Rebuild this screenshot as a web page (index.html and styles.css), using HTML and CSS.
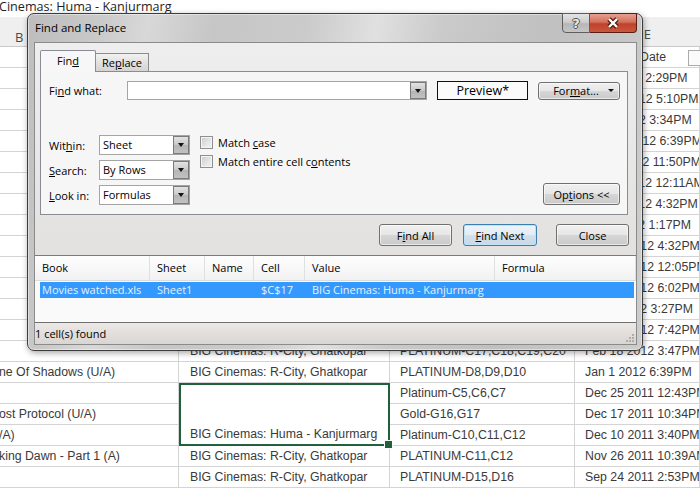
FILE: index.html
```html
<!DOCTYPE html>
<html lang="en">
<head>
  <meta charset="UTF-8" />
  <title>Find and Replace</title>
  <link rel="stylesheet" href="styles.css">
</head>
<body>

  <div class="formula-bar">Cinemas: Huma - Kanjurmarg</div>
  <div class="col-heads"><span class="col-b">B</span><span class="col-e">E</span></div>

  <div class="sheet">
    <div class="a"></div><div class="b"></div><div></div><div class="hd">Date<span class="filter-btn"></span></div>

    <div class="a"></div><div class="b"></div><div></div><div>Jul 8 2012 2:29PM</div>
    <div class="a"></div><div class="b"></div><div></div><div>Jun 24 2012 5:10PM</div>
    <div class="a"></div><div class="b"></div><div></div><div>Jun 9 2012 3:34PM</div>
    <div class="a"></div><div class="b"></div><div></div><div>May 27 2012 6:39PM</div>
    <div class="a"></div><div class="b"></div><div></div><div>May 5 2012 11:50PM</div>
    <div class="a"></div><div class="b"></div><div></div><div>Apr 28 2012 12:11AM</div>
    <div class="a"></div><div class="b"></div><div></div><div>Apr 14 2012 4:32PM</div>
    <div class="a"></div><div class="b"></div><div></div><div>Apr 1 2012 1:17PM</div>
    <div class="a"></div><div class="b"></div><div></div><div>Mar 24 2012 4:32PM</div>
    <div class="a"></div><div class="b"></div><div></div><div>Mar 17 2012 12:05PM</div>
    <div class="a"></div><div class="b"></div><div></div><div>Mar 10 2012 6:02PM</div>
    <div class="a"></div><div class="b"></div><div></div><div>Mar 3 2012 3:27PM</div>
    <div class="a"></div><div class="b"></div><div></div><div>Feb 25 2012 7:42PM</div>
    <div class="a"></div><div class="b">BIG Cinemas: R-City, Ghatkopar</div><div>PLATINUM-C17,C18,C19,C20</div><div>Feb 18 2012 3:47PM</div>
    <div class="a">ne Of Shadows (U/A)</div><div class="b">BIG Cinemas: R-City, Ghatkopar</div><div>PLATINUM-D8,D9,D10</div><div>Jan 1 2012 6:39PM</div>
    <div class="a"></div><div class="b merged">BIG Cinemas: Huma - Kanjurmarg</div><div>Platinum-C5,C6,C7</div><div>Dec 25 2011 12:43PM</div>
    <div class="a">ost Protocol (U/A)</div><div>Gold-G16,G17</div><div>Dec 17 2011 10:34PM</div>
    <div class="a">/A)</div><div>Platinum-C10,C11,C12</div><div>Dec 10 2011 3:40PM</div>
    <div class="a">king Dawn - Part 1 (A)</div><div class="b">BIG Cinemas: R-City, Ghatkopar</div><div>PLATINUM-C11,C12</div><div>Nov 26 2011 10:39AM</div>
    <div class="a"></div><div class="b">BIG Cinemas: R-City, Ghatkopar</div><div>PLATINUM-D15,D16</div><div>Sep 24 2011 2:53PM</div>
  </div>

  <div class="dialog">
    <div class="titlebar">
      <span class="title">Find and Replace</span>
      <div class="caption">
        <span class="cap-help">?</span>
        <span class="cap-close">
          <svg width="14" height="12" viewBox="0 0 14 12">
            <path d="M3 2 L11 10 M11 2 L3 10" stroke="#4a1a12" stroke-width="4.6" fill="none"/>
            <path d="M3 2 L11 10 M11 2 L3 10" stroke="#fff" stroke-width="2.4" fill="none"/>
          </svg>
        </span>
      </div>
    </div>

    <div class="client">
      <div class="tabs">
        <span class="tab active">Fin<u>d</u></span>
        <span class="tab">Re<u>p</u>lace</span>
      </div>

      <div class="panel">
        <div class="find-row">
          <span class="lbl-find">Fi<u>n</u>d what:</span>
          <div class="combo wide"><span class="val"></span><span class="drop"><i class="arrow"></i></span></div>
          <div class="preview">Preview*</div>
          <button class="btn format"><span>For<u>m</u>at...</span><i class="arrow"></i></button>
        </div>

        <div class="opt-row">
          <div class="selects">
            <div class="field"><span class="lbl">Wit<u>h</u>in:</span><div class="combo"><span class="val">Sheet</span><span class="drop"><i class="arrow"></i></span></div></div>
            <div class="field"><span class="lbl"><u>S</u>earch:</span><div class="combo"><span class="val">By Rows</span><span class="drop"><i class="arrow"></i></span></div></div>
            <div class="field"><span class="lbl"><u>L</u>ook in:</span><div class="combo"><span class="val">Formulas</span><span class="drop"><i class="arrow"></i></span></div></div>
          </div>
          <div class="checks">
            <div class="check"><span class="box"></span><span>Match <u>c</u>ase</span></div>
            <div class="check"><span class="box"></span><span>Match entire cell c<u>o</u>ntents</span></div>
          </div>
          <button class="btn options">Op<u>t</u>ions &lt;&lt;</button>
        </div>
      </div>

      <div class="actions">
        <button class="btn find-all">F<u>i</u>nd All</button>
        <button class="btn find-next"><u>F</u>ind Next</button>
        <button class="btn close">Close</button>
      </div>

      <div class="results">
        <div class="res-row res-head">
          <span>Book</span><span>Sheet</span><span>Name</span><span>Cell</span><span>Value</span><span>Formula</span>
        </div>
        <div class="res-row res-sel">
          <span>Movies watched.xls</span><span>Sheet1</span><span></span><span>$C$17</span><span>BIG Cinemas: Huma - Kanjurmarg</span><span></span>
        </div>
      </div>

      <div class="status">
        <span>1 cell(s) found</span>
        <svg class="grip" width="9" height="9" viewBox="0 0 9 9">
          <rect x="7" y="1" width="2" height="2" fill="#b0aca8"/>
          <rect x="4" y="4" width="2" height="2" fill="#b0aca8"/>
          <rect x="7" y="4" width="2" height="2" fill="#b0aca8"/>
          <rect x="1" y="7" width="2" height="2" fill="#b0aca8"/>
          <rect x="4" y="7" width="2" height="2" fill="#b0aca8"/>
          <rect x="7" y="7" width="2" height="2" fill="#b0aca8"/>
        </svg>
      </div>
    </div>
  </div>

</body>
</html>
```

FILE: styles.css
```css
* {
  box-sizing: border-box;
  margin: 0;
  padding: 0;
}

body {
  width: 700px;
  height: 488px;
  overflow: hidden;
  position: relative;
  background: #fff;
  font-family: "Liberation Sans", Arial, sans-serif;
  color: #3a3a3a;
}

/* spreadsheet behind the dialog */

.formula-bar {
  height: 17px;
  margin-left: -1px;
  font: 12.6px/14px "Open Sans", sans-serif;
  color: #1e1e1e;
  white-space: nowrap;
}

.col-heads {
  height: 30px;
  display: flex;
  align-items: flex-end;
  background: #efefef;
  border-bottom: 1px solid #c9c9c9;
  font: 13px/18px "Open Sans", sans-serif;
  color: #4a4a4a;
}

.col-b {
  margin-left: 15px;
}

.col-e {
  margin-left: auto;
  margin-right: 49px;
  margin-bottom: 3px;
}

.sheet {
  display: grid;
  grid-template-columns: 179px 211px 185px 125px;
  grid-auto-rows: 21px;
  font-size: 12.3px;
}

.sheet > div {
  border-right: 1px solid #d4d4d4;
  border-bottom: 1px solid #d4d4d4;
  padding-left: 10px;
  line-height: 20px;
  white-space: nowrap;
  overflow: hidden;
}

.sheet > .a {
  padding-left: 0;
  text-indent: -1px;
}

.sheet > .b {
  padding-left: 11px;
}

.sheet > .hd {
  position: relative;
  padding-left: 65px;
  overflow: visible;
}

.filter-btn {
  position: absolute;
  left: 113px;
  top: 3px;
  width: 14px;
  height: 16px;
  border: 1px solid #ababab;
  background: #fafafa;
}

.sheet > .merged {
  grid-row: span 3;
  position: relative;
  display: flex;
  align-items: flex-end;
  padding-left: 9px;
  line-height: 19px;
  border: 2px solid #20603a;
  overflow: visible;
}

.merged::after {
  content: "";
  position: absolute;
  right: -5px;
  bottom: -5px;
  width: 7px;
  height: 7px;
  background: #20603a;
  border: 1px solid #fff;
}

/* dialog window */

.dialog {
  position: absolute;
  left: 27px;
  top: 13px;
  width: 616px;
  height: 338px;
  display: flex;
  flex-direction: column;
  padding: 0 5px 5px 6px;
  border: 1px solid #3c3c3c;
  border-radius: 7px;
  background: linear-gradient(100deg, #bdbdbd 0%, #c8c8c8 10%, #d8d8d8 18%, #c6c6c6 28%, #cbcbcb 42%, #e0e0e0 52%, #cacaca 62%, #c0c0c0 78%, #cdcdcd 100%);
  box-shadow: 1px 2px 6px rgba(0,0,0,0.35), inset 0 0 0 1px rgba(255,255,255,0.45);
  font-family: "Open Sans", sans-serif;
  font-size: 11px;
  color: #000;
}

.titlebar {
  height: 28px;
  display: flex;
  align-items: flex-start;
}

.title {
  flex: 1;
  padding: 7px 0 0 1px;
  font-size: 11.5px;
  line-height: 14px;
}

.caption {
  display: flex;
  margin-top: -1px;
}

.cap-help,
.cap-close {
  height: 20px;
  display: flex;
  align-items: center;
  justify-content: center;
}

.cap-help {
  width: 28px;
  border: 1px solid #5e5e5e;
  border-radius: 0 0 0 4px;
  background: linear-gradient(#e4e4e4, #cdcdcd 45%, #b6b6b6 55%, #c6c6c6);
  font: bold 13px "DejaVu Sans", sans-serif;
  color: #e8e8e8;
  text-shadow: 1px 0 #555, -1px 0 #555, 0 1px #555, 0 -1px #555;
}

.cap-close {
  width: 47px;
  border: 1px solid #5a1c12;
  border-left: none;
  border-radius: 0 0 4px 0;
  background: linear-gradient(#e6a090, #d3705b 45%, #c0412a 55%, #c8583e);
}

.client {
  flex: 1;
  display: flex;
  flex-direction: column;
  border: 1px solid #8b8b8b;
  background: linear-gradient(#eeeeee, #e5e4e3 55%, #dedcdb);
}

.tabs {
  height: 21px;
  margin: 7px 0 0 5px;
  display: flex;
  align-items: flex-end;
}

.tab {
  height: 18px;
  width: 53px;
  text-align: center;
  line-height: 17px;
  border: 1px solid #898c95;
  border-bottom: none;
  background: linear-gradient(#f2f2f2, #e3e1e0 50%, #d6d3d1);
}

.tab.active {
  position: relative;
  z-index: 1;
  width: 56px;
  height: 22px;
  margin-bottom: -1px;
  line-height: 20px;
  background: #f7f7f7;
  border-radius: 2px 2px 0 0;
}

.tab:not(.active) {
  border-left: none;
}

.panel {
  height: 144px;
  margin: 0 8px 0 5px;
  padding: 9px 7px 9px 8px;
  border: 1px solid #898c95;
  background: #f6f6f6;
}

.find-row {
  display: flex;
  align-items: center;
  height: 19px;
}

.lbl-find {
  width: 78px;
}

.combo {
  position: relative;
  display: flex;
  width: 91px;
  height: 20px;
  border: 1px solid #a4a4a4;
  background: #fff;
}

.combo .val {
  flex: 1;
  padding-left: 3px;
  line-height: 18px;
}

.combo.wide {
  width: 301px;
  height: 19px;
}

.drop {
  width: 16px;
  display: flex;
  align-items: center;
  justify-content: center;
  border: 1px solid #7a7a7a;
  background: linear-gradient(#e2e2e2, #c8c8c8 50%, #b4b4b4 51%, #c2c2c2);
}

.arrow {
  width: 0;
  height: 0;
  border-left: 3.5px solid transparent;
  border-right: 3.5px solid transparent;
  border-top: 4px solid #111;
}

.preview {
  width: 91px;
  height: 19px;
  margin-left: 10px;
  border: 1px solid #111;
  background: #fbfbfb;
  text-align: center;
  font-size: 12.5px;
  line-height: 17px;
}

.btn {
  height: 22px;
  border: 1px solid #707070;
  border-radius: 3px;
  background: linear-gradient(#f0f0f0, #e6e6e6 50%, #d6d6d6 51%, #cacaca);
  box-shadow: inset 0 0 0 1px rgba(255,255,255,0.6);
  font: 11px "Open Sans", sans-serif;
  color: #000;
}

.btn.format {
  width: 82px;
  height: 18px;
  margin-left: 10px;
  display: flex;
  align-items: center;
  padding: 0 5px 0 14px;
  line-height: 14px;
}

.btn.format .arrow {
  margin-left: auto;
  border-left-width: 3px;
  border-right-width: 3px;
  border-top-width: 3px;
}

.opt-row {
  display: flex;
  margin-top: 35px;
}

.selects {
  display: flex;
  flex-direction: column;
  gap: 5px;
}

.field {
  display: flex;
  align-items: center;
}

.field .lbl {
  width: 50px;
}

.checks {
  display: flex;
  flex-direction: column;
  gap: 6px;
  margin: 1px 0 0 10px;
}

.check {
  display: flex;
  align-items: center;
  height: 13px;
}

.box {
  width: 13px;
  height: 13px;
  margin-right: 5px;
  border: 1px solid #8e8f8f;
  background: linear-gradient(135deg, #cbcbcb, #e6e6e6 60%, #f2f2f2);
  box-shadow: inset 0 0 0 1px #f4f4f4;
}

.btn.options {
  width: 77px;
  margin-left: auto;
  align-self: flex-end;
}

.actions {
  display: flex;
  justify-content: flex-end;
  height: 22px;
  margin: 9px 7px 0 0;
}

.actions .btn {
  width: 73px;
}

.btn.find-next {
  width: 74px;
  margin-left: 11px;
  border-color: #3c7fb1;
  background: linear-gradient(#edf5fa, #e2ecf3 50%, #d2e0ea 51%, #c9d9e5);
  box-shadow: inset 0 0 0 1px #bfe2f6;
}

.btn.close {
  margin-left: 19px;
}

.results {
  height: 68px;
  margin-top: 9px;
  border-top: 1px solid #7a7a7a;
  border-bottom: 1px solid #6f6f6f;
  background: #fafafa;
}

.res-row {
  display: grid;
  grid-template-columns: 115px 55px 49px 51px 190px 1fr;
}

.res-row span {
  padding-left: 7px;
  white-space: nowrap;
}

.res-head {
  height: 25px;
  line-height: 24px;
  background: linear-gradient(#fefefe, #f1f2f3);
  border-bottom: 1px solid #dcdcdc;
}

.res-head span {
  border-right: 1px solid #e0e0e0;
}

.res-sel {
  height: 16px;
  margin: 1px 2px 0 5px;
  grid-template-columns: 110px 55px 49px 51px 190px 1fr;
  line-height: 16px;
  background: #3399ff;
  color: #e6f0fc;
}

.res-sel span:first-child {
  padding-left: 2px;
}

.status {
  flex: 1;
  display: flex;
  align-items: center;
  background: linear-gradient(#ebe8e6, #d9d5d2);
}

.grip {
  margin: auto 2px 2px auto;
}
```
